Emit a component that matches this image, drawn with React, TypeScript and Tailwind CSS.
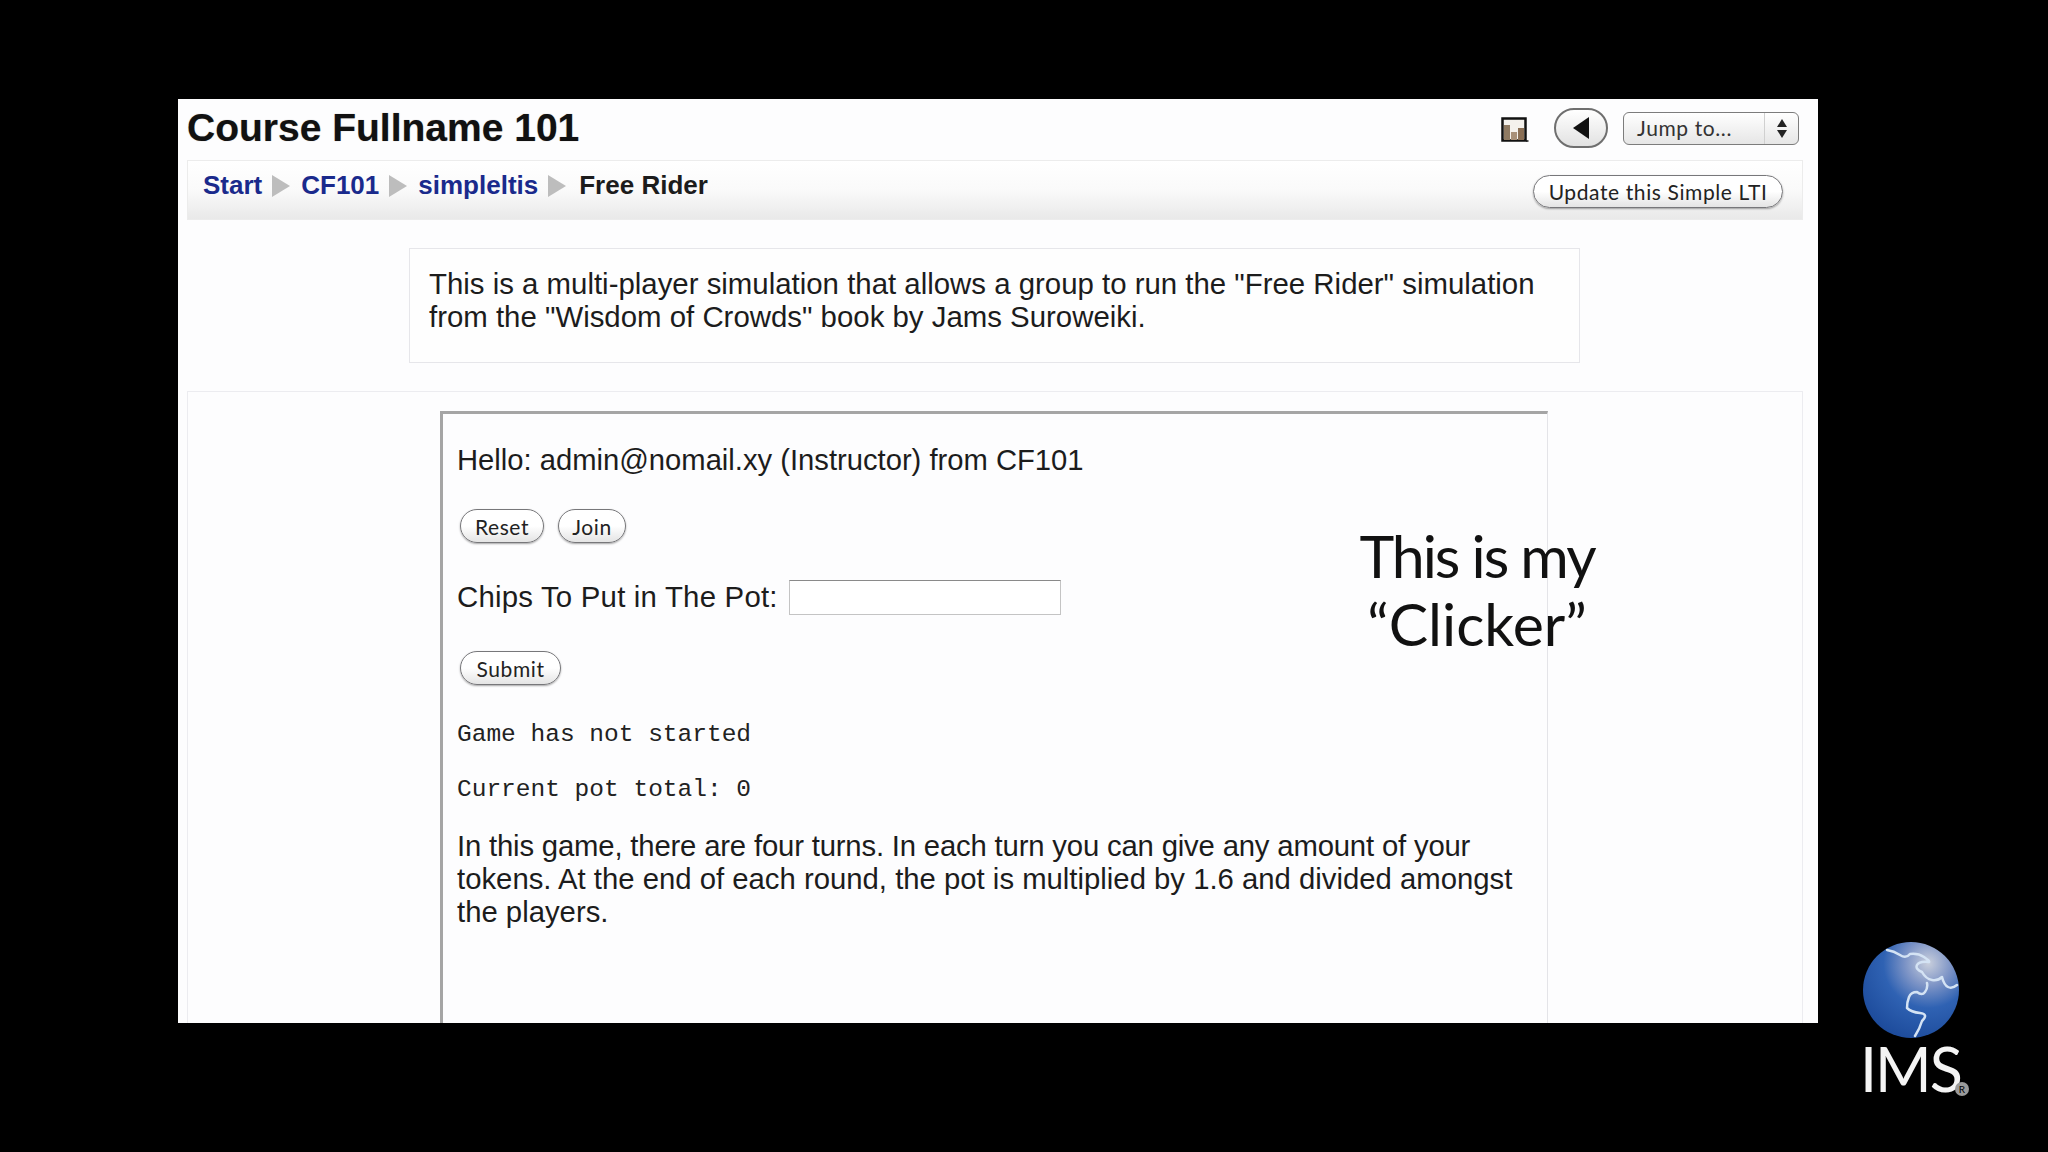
const sans = "font-['Liberation_Sans',Arial,sans-serif]";

const MacButton = ({ label, className = "" }: { label: string; className?: string }) => (
  <button
    className={`flex items-center justify-center rounded-full border border-[#77777a] bg-gradient-to-b from-white via-white to-[#e4e4e4] text-[21px] leading-none tracking-[0.6px] text-[#222] shadow-[0_1px_2px_rgba(0,0,0,0.35)] font-['Lato',sans-serif] ${className}`}
  >
    {label}
  </button>
);

const Sep = () => (
  <svg width="20" height="24" viewBox="0 0 20 24" className="mx-[9px] shrink-0">
    <polygon points="1,1 19,12 1,23" fill="#bdbdbd" />
  </svg>
);

const ReportIcon = () => (
  <svg width="28" height="26" viewBox="0 0 28 26" className="mt-[4px]">
    <rect x="1.5" y="1.5" width="23" height="22" fill="#f4f1ec" stroke="#111" strokeWidth="2.5" />
    <rect x="3" y="8" width="6" height="15" fill="#8f7a62" />
    <rect x="10" y="15" width="6" height="8" fill="#a89078" />
    <rect x="17" y="11" width="6" height="12" fill="#8a6f55" />
    <path d="M25 24h2.5" stroke="#111" strokeWidth="1.5" />
  </svg>
);

const ImsLogo = () => (
  <div className="absolute left-[1858px] top-[940px] w-[112px]">
    <svg width="100" height="100" viewBox="0 0 100 100" className="ml-[3px]">
      <defs>
        <radialGradient id="globe" cx="68%" cy="22%" r="85%">
          <stop offset="0%" stopColor="#c9cfdc" />
          <stop offset="28%" stopColor="#7d94c6" />
          <stop offset="55%" stopColor="#2f62b3" />
          <stop offset="100%" stopColor="#1c4a9a" />
        </radialGradient>
      </defs>
      <circle cx="50" cy="50" r="48" fill="url(#globe)" />
      <path
        d="M26 10Q33 11 39 15T49 14Q57 13 63 17T68 22Q58 21 56 25T61 32Q65 39 71 40T81 37Q83 45 87 47T96 45M66 43Q67 48 64 52T56 52Q50 52 48 57T46 68Q50 72 59 73T61 81Q59 88 54 96"
        fill="none"
        stroke="#d4e3f4"
        strokeWidth="2.5"
        strokeLinejoin="round"
        strokeLinecap="round"
      />
    </svg>
    <div className="relative ml-[2px] mt-[1px] text-[61px] font-normal leading-[56px] tracking-[-2px] text-[#f4f4f4] font-['Lato',sans-serif]">
      IMS
      <span className="absolute left-[95px] top-[41px] flex h-[14px] w-[14px] items-center justify-center rounded-full bg-[#9a9a9a] text-[10px] leading-none tracking-normal text-black">
        R
      </span>
    </div>
  </div>
);

export default function App() {
  return (
    <div className="relative h-[1152px] w-[2048px] overflow-hidden bg-black pl-[178px] pt-[99px]">
      <div className={`relative h-[924px] w-[1640px] overflow-hidden bg-[#fdfdfe] ${sans}`}>
        <div className="mb-[3px] flex h-[58px] items-center pl-[9px] pr-[19px]">
          <h1 className="mb-[2px] flex-1 text-[39px] font-bold leading-none text-[#111] [text-shadow:0_0_1px_rgba(0,0,0,0.4)]">
            Course Fullname 101
          </h1>
          <ReportIcon />
          <button className="ml-[25px] flex h-[40px] w-[54px] items-center justify-center rounded-full border-2 border-[#6f6f6f] bg-gradient-to-b from-white to-[#e2e2e2]">
            <svg width="18" height="22" viewBox="0 0 18 22">
              <polygon points="17,0 17,22 1,11" fill="#111" />
            </svg>
          </button>
          <div className="ml-[15px] flex h-[33px] w-[176px] items-center rounded-[6px] border border-[#7c7c7c] bg-gradient-to-b from-white to-[#e6e6e6] font-['Lato',sans-serif] text-[21px] tracking-[0.6px] text-[#333]">
            <span className="flex-1 pl-[13px]">Jump to...</span>
            <span className="flex h-full w-[34px] flex-col items-center justify-center gap-[3px] border-l border-[#d0d0d0]">
              <svg width="10" height="8" viewBox="0 0 10 8"><polygon points="5,0 10,8 0,8" fill="#222" /></svg>
              <svg width="10" height="8" viewBox="0 0 10 8"><polygon points="0,0 10,0 5,8" fill="#222" /></svg>
            </span>
          </div>
        </div>

        <div className="mx-[9px] flex h-[60px] w-[1616px] items-center border border-[#ececec] bg-gradient-to-b from-white via-[#fafafa] to-[#e9e9e9] pl-[15px] pr-[19px]">
          <div className="flex flex-1 items-center pb-[9px] text-[26px] font-bold text-[#1a2a8c]">
            <span>Start</span>
            <Sep />
            <span className="ml-[1px]">CF101</span>
            <Sep />
            <span className="ml-[1px]">simpleltis</span>
            <Sep />
            <span className="ml-[3px] text-[#1c1c1c]">Free Rider</span>
          </div>
          <MacButton label="Update this Simple LTI" className="mt-[2px] h-[33px] w-[250px]" />
        </div>

        <div className="ml-[231px] mt-[28px] h-[115px] w-[1171px] border border-[#e6e6ea] bg-[#fefefe] px-[19px] pt-[18px] text-[29.4px] leading-[33px] text-[#1c1c1c]">
          This is a multi-player simulation that allows a group to run the "Free Rider" simulation
          <br />
          from the "Wisdom of Crowds" book by Jams Suroweiki.
        </div>

        <div className="mx-[9px] mt-[28px] h-[700px] w-[1616px] border border-[#ececf0] pl-[252px] pt-[19px]">
          <div className="h-[700px] w-[1108px] border-l-[3px] border-r border-t-[3px] border-l-[#a5a5a5] border-r-[#e4e4e8] border-t-[#a5a5a5] pl-[14px] pt-[30px] text-[#1c1c1c]">
            <p className="text-[29.2px] leading-[33px]">Hello: admin@nomail.xy (Instructor) from CF101</p>
            <div className="ml-[3px] mt-[32px] flex gap-[14px]">
              <MacButton label="Reset" className="h-[34px] w-[84px]" />
              <MacButton label="Join" className="h-[34px] w-[68px]" />
            </div>
            <div className="mt-[34px] flex items-center">
              <span className="text-[29.4px] leading-[33px] tracking-[0.2px]">Chips To Put in The Pot:</span>
              <div className="ml-[11px] mt-[3px] h-[35px] w-[272px] border border-[#c4c4c4] border-t-[#8a8a8a] bg-white" />
            </div>
            <MacButton label="Submit" className="ml-[3px] mt-[36px] h-[34px] w-[101px]" />
            <p className="mt-[36px] font-['Liberation_Mono',monospace] text-[24.5px] leading-[27px] text-[#222]">Game has not started</p>
            <p className="mt-[28px] font-['Liberation_Mono',monospace] text-[24.5px] leading-[27px] text-[#222]">Current pot total: 0</p>
            <p className="mt-[26px] text-[29.3px] leading-[33px]">
              <span className="tracking-[-0.18px]">In this game, there are four turns. In each turn you can give any amount of your</span>
              <br />
              tokens. At the end of each round, the pot is multiplied by 1.6 and divided amongst
              <br />
              the players.
            </p>
          </div>
        </div>

        <div className="absolute left-[1149px] top-[423px] w-[300px] whitespace-nowrap text-center font-['Lato',sans-serif] text-[59px] leading-[68px] text-[#111]">
          <span className="tracking-[-2px]">This is my</span>
          <br />
          “Clicker”
        </div>
      </div>
      <ImsLogo />
    </div>
  );
}
